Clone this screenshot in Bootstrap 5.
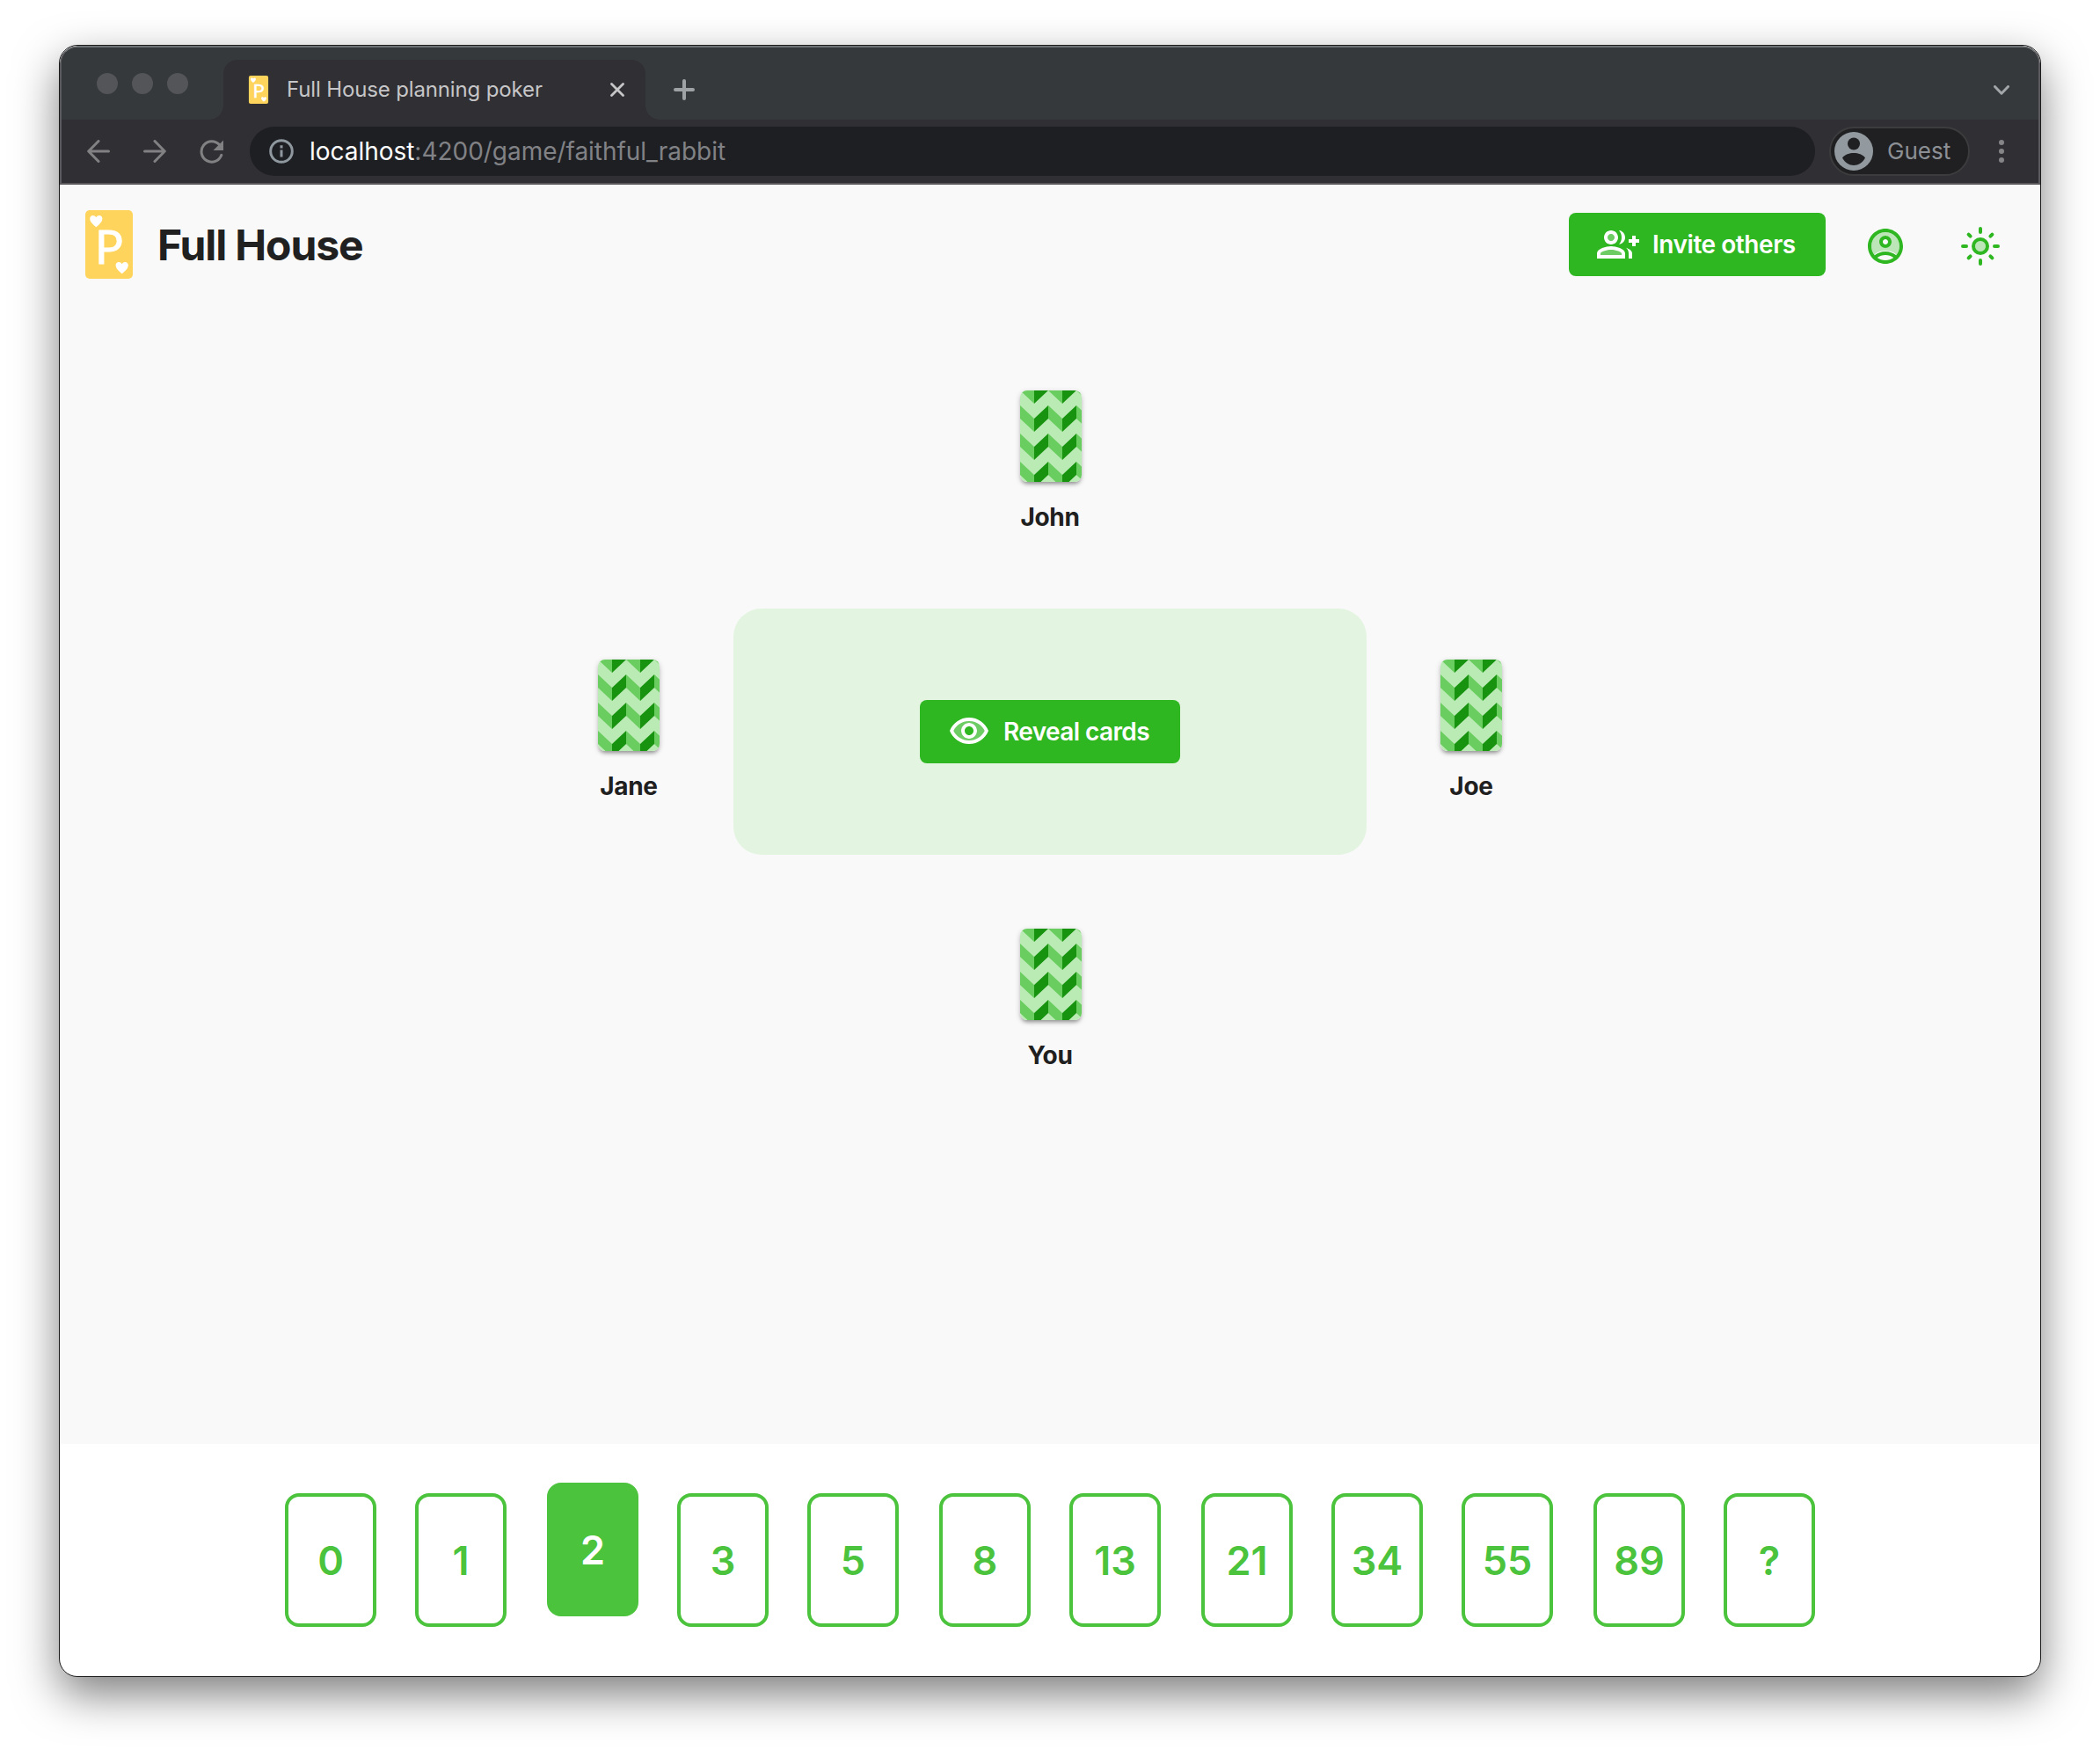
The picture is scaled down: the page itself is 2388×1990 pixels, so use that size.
<!DOCTYPE html>
<html lang="en">
<head>
<meta charset="utf-8">
<meta name="viewport" content="width=device-width, initial-scale=1">
<title>Full House planning poker</title>
<link href="https://cdn.jsdelivr.net/npm/bootstrap@5.3.0/dist/css/bootstrap.min.css" rel="stylesheet">
<style>
  :root { --fh-green: #2fb722; --fh-green-soft: #4bc33c; }
  body { font-family: Inter, "Liberation Sans", sans-serif; color: #202020; background: #fff; line-height: 1; padding: 51px 67px 0; min-height: 1990px; }
  svg { display: block; flex: none; }
  .app-window { width: 2254px; height: 1856px; border: 1px solid #1b1b1c; border-radius: 21px; overflow: hidden; box-shadow: 0 20px 50px rgba(0,0,0,.5); background: #fff; }
  .chrome { background: #302f33; border: 2px solid #5b5b5f; border-top-color: #6f7274; border-bottom: 0; border-radius: 20px 20px 0 0; height: 156px; flex: none; }
  .tab-strip { height: 82px; background: #35393b; border-radius: 18px 18px 0 0; }
  .dots { gap: 16px; padding: 29px 40px 0 40px; width: 184px; }
  .dots i { width: 24px; height: 24px; border-radius: 50%; background: #545559; }
  .tab-active { position: relative; width: 480px; height: 68px; margin-top: 14px; background: #302f33; border-radius: 16px 16px 0 0; color: #c6c6c8; font-size: 24px; padding: 0 24px 0 28px; }
  .tab-active::before, .tab-active::after { content: ""; position: absolute; bottom: 0; width: 16px; height: 16px; }
  .tab-active::before { right: 100%; background: radial-gradient(circle at 0 0, transparent 15.5px, #302f33 16px); }
  .tab-active::after { left: 100%; background: radial-gradient(circle at 100% 0, transparent 15.5px, #302f33 16px); }
  .tab-title { margin-left: 20px; letter-spacing: -.14px; }
  .tool-row { height: 72px; padding: 8px 0; }
  .omnibox { background: #1e1f23; border-radius: 28px; width: 1780px; height: 56px; padding-left: 22px; font-size: 28px; color: #818286; margin-left: 30px; letter-spacing: -.03px; }
  .omnibox b { color: #fff; font-weight: 400; }
  .guest-chip { width: 160px; height: 56px; border: 2px solid #3c3c3e; border-radius: 28px; background: #202022; color: #8c9095; font-size: 26px; margin-left: 16px; padding-left: 4px; gap: 16px; }
  .chrome-edge { height: 2px; background: #5a575b; flex: none; }
  .game-page { background: #f9f9f9; height: 1432px; flex: none; }
  .game-header { height: 127px; padding: 0 44px 0 29px; }
  .brand-name { font-size: 48px; font-weight: 700; margin-left: 28px; padding-top: 3px; letter-spacing: -1.1px; }
  .btn-game { --bs-btn-bg: var(--fh-green); --bs-btn-color: #fff; --bs-btn-border-width: 0; --bs-btn-hover-bg: #29a51d; --bs-btn-hover-color: #fff; --bs-btn-border-radius: 8px; --bs-btn-font-size: 28px; --bs-btn-font-weight: 600; --bs-btn-padding-x: 32px; --bs-btn-padding-y: 0; height: 72px; line-height: 1; white-space: nowrap; letter-spacing: -.45px; }
  .head-icon { margin-top: 4px; }
  .board { padding-top: 107px; gap: 84px; }
  .board > .seat > .card-back { margin-left: 2px; }
  .seat { width: 70px; height: 164px; }
  .card-back { border-radius: 8px; overflow: hidden; width: 70px; height: 104px; flex: none; box-shadow: 0 4px 4px -2px rgba(0,0,0,.3), 0 2px 6px rgba(0,0,0,.2); }
  .seat-name { font-size: 28px; font-weight: 700; line-height: 40px; margin-top: 20px; white-space: nowrap; letter-spacing: -.3px; }
  .felt { width: 720px; height: 280px; border-radius: 32px; background: #e3f5e1; }
  .deck { padding: 56px 256px 0; gap: 44px; }
  .pick { width: 104px; height: 152px; flex: none; border: 4px solid var(--fh-green-soft); border-radius: 16px; color: var(--fh-green-soft); background: #fff; font-size: 45px; font-weight: 600; padding: 0; }
  .pick:is(:nth-child(3), :nth-child(6), :nth-child(8), :nth-child(11)) { margin-left: 2px; }
  .pick.chosen { background: var(--fh-green-soft); color: #fff; margin-top: -12px; }
</style>
</head>
<body>
<svg width="0" height="0" class="position-absolute" aria-hidden="true">
  <defs>
    <pattern id="zigzag" width="32" height="32" patternUnits="userSpaceOnUse">
      <rect width="32" height="32" fill="#bbebb5"/>
      <path d="M0 17l16 15V47L0 32zM0-15L16 0V15L0 0z" fill="#6acd5f"/>
      <path d="M32 17L16 32V47L32 32zM32-15L16 0V15L32 0z" fill="#17930f"/>
    </pattern>
    <symbol id="back" viewBox="0 0 70 104"><rect width="70" height="104" fill="url(#zigzag)" shape-rendering="crispEdges"/></symbol>
    <symbol id="logo" viewBox="0 0 54 78">
      <rect width="54" height="78" rx="5" fill="#ffd45c"/>
      <path id="heart" d="M12.300 19.200C9 16.500 5.200 13.600 5.200 9.500c0-4 5.300-4.800 7.100-1.200 1.800-3.600 7.100-2.800 7.100 1.200 0 4.100-3.800 7-7.100 9.700z" fill="#fff"/>
      <use href="#heart" x="29.400" y="53"/>
      <text x="11" y="60.500" font-family="Lato, sans-serif" font-size="53" fill="#fff" stroke="#fff" stroke-width=".8">P</text>
    </symbol>
  </defs>
</svg>

<div class="app-window d-flex flex-column">
  <div class="chrome">
    <div class="tab-strip d-flex">
      <div class="dots d-flex"><i></i><i></i><i></i></div>
      <div class="tab-active d-flex align-items-center">
        <svg width="24" height="32"><use href="#logo" width="24" height="32"/></svg>
        <span class="tab-title">Full House planning poker</span>
        <svg class="ms-auto" width="16" height="16" viewBox="0 0 16 16" stroke="#c6c6c8" stroke-width="2.800" stroke-linecap="round"><path d="M1.500 1.500l13 13M14.500 1.500l-13 13"/></svg>
      </div>
      <svg width="24" height="24" viewBox="0 0 24 24" style="margin:36px 0 0 32px" stroke="#9fa2a4" stroke-width="4" stroke-linecap="round"><path d="M12 2v20M2 12h20"/></svg>
      <svg class="ms-auto" width="18" height="12" viewBox="0 0 18 12" style="margin-top:43px;margin-right:33px" fill="none" stroke="#a3a6a8" stroke-width="3" stroke-linecap="round" stroke-linejoin="round"><path d="M1.500 1.500L9 9.200l7.500-7.700"/></svg>
    </div>
    <div class="tool-row d-flex align-items-center">
      <svg width="26" height="26" viewBox="0 0 26 26" style="margin-left:29px" fill="none" stroke="#818083" stroke-width="3" stroke-linecap="round" stroke-linejoin="round"><path d="M24.500 13H2M13 1.500L1.700 13 13 24.500"/></svg>
      <svg width="26" height="26" viewBox="0 0 26 26" style="margin-left:38px" fill="none" stroke="#818083" stroke-width="3" stroke-linecap="round" stroke-linejoin="round"><path d="M1.500 13H24M13 1.500L24.300 13 13 24.500"/></svg>
      <svg width="27" height="27" viewBox="0 0 27 27" style="margin-left:38px" fill="none" stroke="#818083" stroke-width="3"><path d="M24.800 17.300A11.700 11.700 0 1 1 22.600 5.800" stroke-linecap="round"/><path d="M27 .5V12H15.500z" fill="#818083" stroke="none"/></svg>
      <div class="omnibox d-flex align-items-center">
        <svg width="28" height="28" viewBox="0 0 28 28" fill="none" stroke="#8f979f" stroke-width="3"><circle cx="14" cy="14" r="12.300"/><path d="M14 12.500v8M14 7.200v3.300"/></svg>
        <span class="url-text" style="margin-left:18px"><b>localhost</b>:4200/game/faithful_rabbit</span>
      </div>
      <div class="guest-chip d-flex align-items-center">
        <svg width="44" height="44" viewBox="0 0 44 44"><circle cx="22" cy="22" r="22" fill="#929aa0"/><circle cx="22" cy="13.500" r="7" fill="#202022"/><path d="M9 29.500c3-4 8-5.500 13-5.500s10 1.500 13 5.500c-2.500 5-8 8.500-13 8.500S11.500 34.500 9 29.500z" fill="#202022"/></svg>
        <span>Guest</span>
      </div>
      <svg width="6" height="26" viewBox="0 0 6 26" style="margin-left:33px" fill="#858487"><circle cx="3" cy="3" r="3"/><circle cx="3" cy="13" r="3"/><circle cx="3" cy="23" r="3"/></svg>
    </div>
  </div>
  <div class="chrome-edge"></div>

  <main class="game-page">
    <header class="game-header d-flex align-items-center pt-2">
      <svg width="54" height="78"><use href="#logo" width="54" height="78"/></svg>
      <h1 class="brand-name mb-0">Full House</h1>
      <button class="btn btn-game ms-auto d-flex align-items-center" style="width:292px">
        <svg width="48" height="48" viewBox="0 0 24 24" fill="#fff" fill-rule="evenodd">
          <g opacity=".3"><circle cx="8" cy="8" r="2"/><path d="M8 15c-2.700 0-5.800 1.290-6 2.010V18h12v-1c-.2-.71-3.300-2-6-2z"/></g>
          <path d="M8 12c2.210 0 4-1.790 4-4s-1.790-4-4-4-4 1.790-4 4 1.790 4 4 4zM8 6c1.100 0 2 .9 2 2s-.9 2-2 2-2-.9-2-2 .9-2 2-2z"/>
          <path d="M8 13c-2.670 0-8 1.340-8 4v3h16v-3c0-2.660-5.330-4-8-4zm6 5H2v-.99C2.200 16.290 5.300 15 8 15s5.800 1.290 6 2z"/>
          <path d="M12.510 4.050C13.430 5.110 14 6.490 14 8s-.57 2.890-1.490 3.950C14.470 11.700 16 10.040 16 8s-1.530-3.700-3.490-3.950zM16.530 13.830C17.420 14.660 18 15.700 18 17v3h2v-3c0-1.450-1.590-2.510-3.470-3.170zM20 7h2v2h2v2h-2v2h-2v-2h-2V9h2z"/>
        </svg>
        <span style="margin-left:15px">Invite others</span>
      </button>
      <svg class="head-icon" width="48" height="48" viewBox="0 0 24 24" style="margin-left:44px" fill="#2fb722">
        <path opacity=".3" d="M12 4c-4.410 0-8 3.590-8 8 0 1.820.62 3.490 1.640 4.830 1.430-1.740 4.900-2.330 6.360-2.330s4.930.59 6.360 2.330C19.380 15.490 20 13.820 20 12c0-4.410-3.590-8-8-8zm0 9c-1.940 0-3.500-1.560-3.500-3.500S10.060 6 12 6s3.500 1.560 3.500 3.500S13.940 13 12 13z"/>
        <path d="M12 2C6.480 2 2 6.480 2 12s4.480 10 10 10 10-4.480 10-10S17.520 2 12 2zM7.350 18.500C8.660 17.560 10.260 17 12 17s3.340.56 4.650 1.500C15.340 19.440 13.740 20 12 20s-3.340-.56-4.650-1.500zm10.790-1.380C16.450 15.800 14.320 15 12 15s-4.450.8-6.140 2.120C4.700 15.730 4 13.950 4 12c0-4.420 3.580-8 8-8s8 3.580 8 8c0 1.950-.7 3.730-1.860 5.120z"/>
        <path d="M12 6c-1.930 0-3.500 1.570-3.500 3.500S10.070 13 12 13s3.500-1.570 3.500-3.500S13.930 6 12 6zm0 5c-.83 0-1.500-.67-1.500-1.500S11.170 8 12 8s1.500.67 1.500 1.500S12.830 11 12 11z"/>
      </svg>
      <svg class="head-icon" width="48" height="48" viewBox="0 0 24 24" style="margin-left:60px" fill="none" stroke="#2fb722" stroke-width="2" stroke-linecap="round">
        <circle cx="12" cy="12" r="3" fill="#2fb722" opacity=".3" stroke="none"/><circle cx="12" cy="12" r="4"/>
        <path d="M12 2v2M12 20v2M2 12h2M20 12h2M5.300 5.300l1 1M17.700 17.700l1 1M5.300 18.700l1-1M17.700 6.300l1-1"/>
      </svg>
    </header>

    <section class="board d-flex flex-column align-items-center">
      <div class="seat d-flex flex-column align-items-center"><div class="card-back"><svg width="70" height="104"><use href="#back" width="70" height="104"/></svg></div><div class="seat-name">John</div></div>
      <div class="d-flex align-items-center" style="gap:84px">
        <div class="seat d-flex flex-column align-items-center"><div class="card-back"><svg width="70" height="104"><use href="#back" width="70" height="104"/></svg></div><div class="seat-name">Jane</div></div>
        <div class="felt d-flex align-items-center justify-content-center">
          <button class="btn btn-game d-flex align-items-center" style="width:296px">
            <svg width="48" height="48" viewBox="0 0 24 24" fill="#fff">
              <path opacity=".3" d="M12 6c-3.790 0-7.170 2.130-8.820 5.500C4.830 14.870 8.210 17 12 17s7.170-2.130 8.820-5.500C19.170 8.130 15.790 6 12 6zm0 10c-2.480 0-4.500-2.020-4.500-4.500S9.520 7 12 7s4.500 2.020 4.500 4.500S14.480 16 12 16z"/>
              <path d="M12 4C7 4 2.730 7.110 1 11.500 2.730 15.890 7 19 12 19s9.270-3.110 11-7.500C21.270 7.110 17 4 12 4zm0 13c-3.790 0-7.170-2.130-8.820-5.500C4.830 8.130 8.210 6 12 6s7.170 2.130 8.820 5.500C19.170 14.870 15.790 17 12 17zm0-10c-2.480 0-4.500 2.020-4.500 4.500S9.520 16 12 16s4.500-2.020 4.500-4.500S14.480 7 12 7zm0 7c-1.380 0-2.500-1.120-2.500-2.500S10.620 9 12 9s2.500 1.120 2.500 2.500S13.380 14 12 14z"/>
            </svg>
            <span style="margin-left:15px;letter-spacing:-.6px">Reveal cards</span>
          </button>
        </div>
        <div class="seat d-flex flex-column align-items-center"><div class="card-back"><svg width="70" height="104"><use href="#back" width="70" height="104"/></svg></div><div class="seat-name">Joe</div></div>
      </div>
      <div class="seat d-flex flex-column align-items-center"><div class="card-back"><svg width="70" height="104"><use href="#back" width="70" height="104"/></svg></div><div class="seat-name">You</div></div>
    </section>
  </main>

  <footer class="deck d-flex align-items-start">
    <button class="pick">0</button><button class="pick">1</button><button class="pick chosen">2</button><button class="pick">3</button><button class="pick">5</button><button class="pick">8</button><button class="pick">13</button><button class="pick">21</button><button class="pick">34</button><button class="pick">55</button><button class="pick">89</button><button class="pick">?</button>
  </footer>
</div>
<script src="https://cdn.jsdelivr.net/npm/bootstrap@5.3.0/dist/js/bootstrap.bundle.min.js"></script>
</body>
</html>
